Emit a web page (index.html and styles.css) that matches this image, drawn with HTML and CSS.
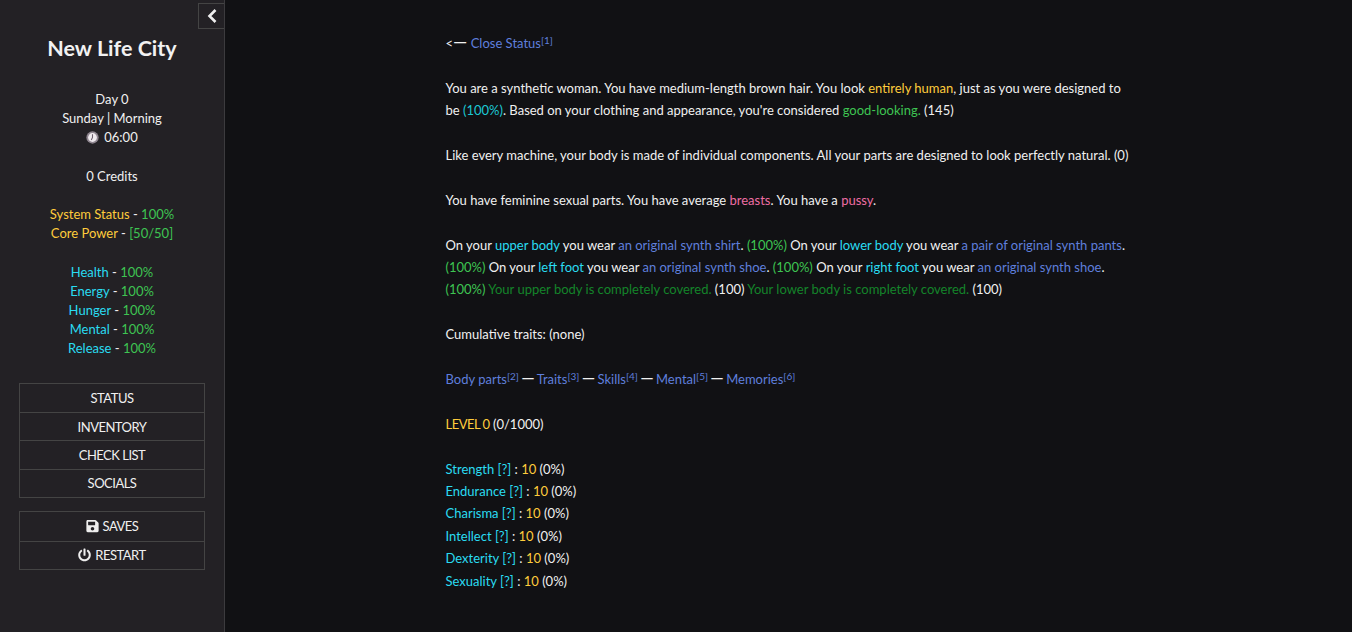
FILE: index.html
```html
<!DOCTYPE html>
<html lang="en">
<head>
<meta charset="utf-8">
<title>New Life City</title>
<link rel="stylesheet" href="styles.css">
</head>
<body>
<aside class="sidebar">
  <button class="toggle" aria-label="Collapse"><svg class="chev" viewBox="0 0 12 16"><path d="M9.5 2 3.5 8l6 6"/></svg></button>
  <h1 class="title">New Life City</h1>
  <div class="caption">
    <p class="group">Day 0<br>Sunday | Morning<br><svg class="clock" viewBox="0 0 16 16"><circle cx="8" cy="8" r="7.6" fill="#8f8690"/><circle cx="8" cy="8" r="5.4" fill="#efeaee"/><path d="M8 4v4l-1.5 3" fill="none" stroke="#6b5f6c" stroke-width="1.3"/></svg>06:00</p>
    <p class="group">0 Credits</p>
    <p class="group"><span class="gold">System Status</span> - <span class="lime">100%</span><br><span class="gold">Core Power</span> - <span class="lime">[50/50]</span></p>
    <p class="group"><span class="cyan">Health</span> - <span class="lime">100%</span><br><span class="cyan">Energy</span> - <span class="lime">100%</span><br><span class="cyan">Hunger</span> - <span class="lime">100%</span><br><span class="cyan">Mental</span> - <span class="lime">100%</span><br><span class="cyan">Release</span> - <span class="lime">100%</span></p>
  </div>
  <nav class="menu">
    <a class="item">STATUS</a>
    <a class="item">INVENTORY</a>
    <a class="item">CHECK LIST</a>
    <a class="item">SOCIALS</a>
  </nav>
  <nav class="menu second">
    <a class="item"><svg class="ico" viewBox="0 0 448 512"><path d="M433.941 129.941l-83.882-83.882A48 48 0 0 0 316.118 32H48C21.49 32 0 53.49 0 80v352c0 26.51 21.49 48 48 48h352c26.51 0 48-21.49 48-48V163.882a48 48 0 0 0-14.059-33.941zM224 416c-35.346 0-64-28.654-64-64 0-35.346 28.654-64 64-64s64 28.654 64 64c0 35.346-28.654 64-64 64zm96-304.52V212c0 6.627-5.373 12-12 12H76c-6.627 0-12-5.373-12-12V108c0-6.627 5.373-12 12-12h228.52c3.183 0 6.235 1.264 8.485 3.515l3.48 3.48A11.996 11.996 0 0 1 320 111.48z"/></svg>SAVES</a>
    <a class="item"><svg class="ico" viewBox="0 0 512 512"><path d="M400 54.1c63 45 104 118.6 104 201.9 0 136.8-110.8 247.7-247.5 248C120 504.3 8.2 393 8 256.4 7.9 173.1 48.9 99.3 111.8 54.2c11.7-8.3 28-4.8 35 7.7L162.6 90c5.9 10.5 3.1 23.8-6.6 31-41.5 30.8-68 79.6-68 134.9-.1 92.3 74.5 168.1 168 168.1 91.6 0 168.6-74.2 168-169.1-.3-51.8-24.7-101.8-68.1-134-9.7-7.2-12.4-20.5-6.5-30.9l15.8-28.1c7-12.4 23.2-16.1 34.8-7.9zM296 264V24c0-13.3-10.7-24-24-24h-32c-13.3 0-24 10.7-24 24v240c0 13.3 10.7 24 24 24h32c13.3 0 24-10.7 24-24z"/></svg>RESTART</a>
  </nav>
</aside>
<main class="story">
  <div class="passage">
    <p class="para">&lt;<span class="dash lead">—</span> <a class="link">Close Status<sup>[1]</sup></a></p>
    <p class="para">You are a synthetic woman. You have medium-length brown hair. You look <span class="gold">entirely human</span>, just as you were designed to<br>be <span class="teal">(100%)</span>. Based on your clothing and appearance, you're considered <span class="lime">good-looking.</span> (145)</p>
    <p class="para">Like every machine, your body is made of individual components. All your parts are designed to look perfectly natural. (0)</p>
    <p class="para">You have feminine sexual parts. You have average <span class="pink">breasts</span>. You have a <span class="pink">pussy</span>.</p>
    <p class="para">On your <span class="cyan">upper body</span> you wear <a class="link">an original synth shirt</a>. <span class="lime">(100%)</span> On your <span class="cyan">lower body</span> you wear <a class="link">a pair of original synth pants</a>.<br><span class="lime">(100%)</span> On your <span class="cyan">left foot</span> you wear <a class="link">an original synth shoe</a>. <span class="lime">(100%)</span> On your <span class="cyan">right foot</span> you wear <a class="link">an original synth shoe</a>.<br><span class="lime">(100%)</span> <span class="dark">Your upper body is completely covered.</span> (100) <span class="dark">Your lower body is completely covered.</span> (100)</p>
    <p class="para">Cumulative traits: (none)</p>
    <p class="para"><a class="link">Body parts<sup>[2]</sup></a> <span class="dash">—</span> <a class="link">Traits<sup>[3]</sup></a> <span class="dash">—</span> <a class="link">Skills<sup>[4]</sup></a> <span class="dash">—</span> <a class="link">Mental<sup>[5]</sup></a> <span class="dash">—</span> <a class="link">Memories<sup>[6]</sup></a></p>
    <p class="para"><span class="gold caps">LEVEL 0</span> (0/1000)</p>
    <p class="para"><span class="cyan">Strength [?]</span> : <span class="gold">10</span> (0%)<br><span class="cyan">Endurance [?]</span> : <span class="gold">10</span> (0%)<br><span class="cyan">Charisma [?]</span> : <span class="gold">10</span> (0%)<br><span class="cyan">Intellect [?]</span> : <span class="gold">10</span> (0%)<br><span class="cyan">Dexterity [?]</span> : <span class="gold">10</span> (0%)<br><span class="cyan">Sexuality [?]</span> : <span class="gold">10</span> (0%)</p>
  </div>
</main>
</body>
</html>
```
FILE: styles.css
```css
* { box-sizing: border-box; }
html, body { height: 100%; }
body {
  margin: 0;
  display: flex;
  height: 632px;
  overflow: hidden;
  background: #111114;
  color: #f0f0f0;
  font-family: "Lato", "Noto Sans", sans-serif;
  font-size: 13px;
}
.sidebar {
  position: relative;
  flex: 0 0 225px;
  height: 632px;
  background: #232125;
  border-right: 1px solid #3c3b3e;
  padding: 0 19px;
  text-align: center;
}
.toggle {
  position: absolute;
  top: 3px;
  right: 0;
  width: 26px;
  height: 26px;
  padding: 0;
  background: transparent;
  border: 1px solid #444;
  border-right: 0;
  display: flex;
  align-items: center;
  justify-content: center;
}
.chev { width: 12px; height: 16px; fill: none; stroke: #eee; stroke-width: 2.6; }
.title {
  margin: 0;
  padding-top: 35px;
  font-size: 21.5px;
  line-height: 27px;
  font-weight: 700;
  color: #f2f2f2;
}
.caption { margin-top: 27.8px; line-height: 19.2px; }
.group { margin: 0 0 19.2px; }
.clock { width: 13px; height: 13px; vertical-align: -2px; margin-right: 5px; }
.menu { display: flex; flex-direction: column; border: 1px solid #444; margin-top: 24px; }
.menu.second { margin-top: 13px; }
.item {
  height: 28.4px;
  display: flex;
  align-items: center;
  justify-content: center;
  gap: 4px;
  letter-spacing: -0.5px;
  color: #f0f0f0;
  border-top: 1px solid #444;
}
.item:first-child { border-top: 0; }
.ico { width: 13px; height: 14px; fill: #eee; }
.story { flex: 1; display: flex; justify-content: center; padding-top: 32px; }
.passage { width: 686px; line-height: 22.4px; }
.para { margin: 0 0 22.4px; }
sup { font-size: 10px; line-height: 0; vertical-align: 4px; }
.dash { font-size: 17px; line-height: 0; margin: 0 -1px; }
.dash.lead { font-size: 18px; margin: 0; }
.caps { letter-spacing: -0.5px; }
.gold { color: #ffcc3c; }
.lime { color: #3ec452; }
.cyan { color: #2adcf2; }
.teal { color: #1cc8d4; }
.link { color: #5f7fdc; }
.pink { color: #ee6ea4; }
.dark { color: #14842a; }
```
